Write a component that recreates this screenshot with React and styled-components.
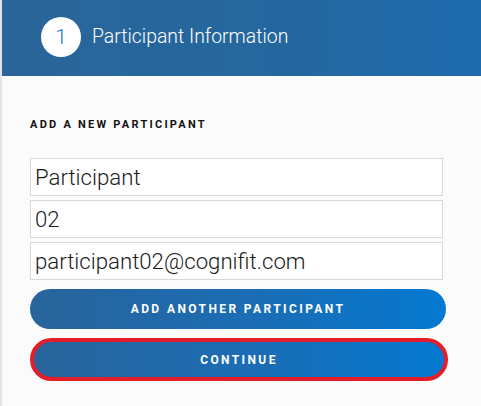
import React, { useState } from 'react';
import styled, { createGlobalStyle } from 'styled-components';

const GlobalStyle = createGlobalStyle`
    html, body {
        margin: 0;
        background: #fbfbfb;
        font-family: Roboto, 'Liberation Sans', sans-serif;
    }
    * {
        box-sizing: border-box;
    }
`;

const App = () => {
    const [firstName, setFirstName] = useState('Participant');
    const [lastName, setLastName] = useState('02');
    const [email, setEmail] = useState('participant02@cognifit.com');

    return (
        <Page>
            <GlobalStyle />
            <Header>
                <StepNumber>1</StepNumber>
                <Title>Participant Information</Title>
            </Header>
            <Body>
                <SectionLabel>Add a new participant</SectionLabel>
                <Fields>
                    <Input
                        type="text"
                        value={firstName}
                        onChange={(e) => setFirstName(e.target.value)}
                    />
                    <Input
                        type="text"
                        value={lastName}
                        onChange={(e) => setLastName(e.target.value)}
                    />
                    <Input
                        type="email"
                        value={email}
                        onChange={(e) => setEmail(e.target.value)}
                    />
                </Fields>
                <Button type="button">Add another participant</Button>
                <Button type="button" $focused>
                    Continue
                </Button>
            </Body>
        </Page>
    );
};

const Page = styled.div`
    min-height: 406px;
    border-left: 2px solid #e3e3e3;
`;

const Header = styled.div`
    height: 76px;
    display: flex;
    align-items: center;
    gap: 11px;
    padding: 0 0 3px 39px;
    background: linear-gradient(90deg, #2a6599 0%, #24679f 60%, #1d6aae 100%);
`;

const StepNumber = styled.div`
    width: 40px;
    height: 40px;
    border-radius: 50%;
    background: #fff;
    color: #1f74c0;
    display: flex;
    align-items: center;
    justify-content: center;
    font-size: 21px;
    font-weight: 300;
`;

const Title = styled.div`
    color: #fff;
    font-size: 19.4px;
    font-weight: 300;
`;

const Body = styled.div`
    padding: 42px 0 0 28px;
    width: 446px;
`;

const SectionLabel = styled.div`
    font-size: 11px;
    font-weight: 700;
    letter-spacing: 2.25px;
    text-transform: uppercase;
    color: #111;
    line-height: 14px;
    margin-bottom: 26px;
`;

const Fields = styled.div`
    display: flex;
    flex-direction: column;
    gap: 4px;
    width: 413px;
    margin-bottom: 9px;
`;

const Input = styled.input`
    height: 38px;
    border: 1px solid #d8d8d8;
    background: #fff;
    padding: 0 4px;
    font-family: Roboto, 'Liberation Sans', sans-serif;
    font-size: 22.2px;
    font-weight: 300;
    color: #1a1a1a;
    outline: none;
`;

const Button = styled.button`
    display: block;
    width: ${(p) => (p.$focused ? '418px' : '416px')};
    height: ${(p) => (p.$focused ? '43px' : '40px')};
    margin-bottom: 9px;
    border-radius: 22px;
    border: ${(p) => (p.$focused ? '4px solid #e31e2a' : 'none')};
    background: linear-gradient(90deg, #28649b 0%, #1a6db5 55%, #0479d1 100%);
    color: #fff;
    font-family: Roboto, 'Liberation Sans', sans-serif;
    font-size: 12px;
    font-weight: 700;
    letter-spacing: 2.4px;
    text-transform: uppercase;
    cursor: pointer;
`;

export default App;
